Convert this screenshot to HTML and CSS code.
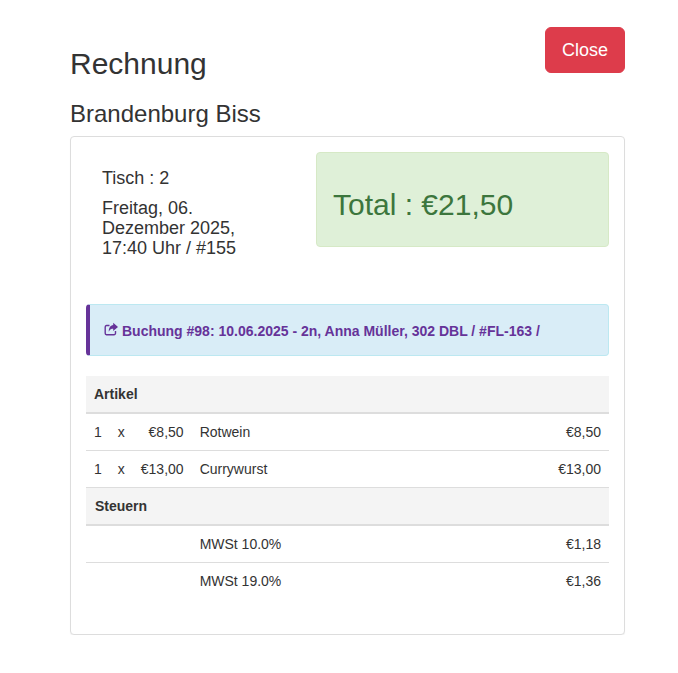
FILE: index.html
```html
<!DOCTYPE html>
<html lang="de">
<head>
<meta charset="utf-8">
<title>Rechnung</title>
<link rel="stylesheet" href="styles.css">
</head>
<body>
<main class="page">
  <header class="head">
    <h2 class="title">Rechnung</h2>
    <button class="close-btn" type="button">Close</button>
  </header>
  <h3 class="subtitle">Brandenburg Biss</h3>
  <section class="card">
    <div class="summary">
      <div class="meta">
        <p class="meta-line">Tisch : 2</p>
        <p class="meta-line">Freitag, 06. Dezember 2025, 17:40 Uhr / #155</p>
      </div>
      <div class="total">Total : €21,50</div>
    </div>
    <div class="booking">
      <svg class="share" viewBox="0 0 14 14" aria-hidden="true"><path d="M11.500 9v2.200a1.500 1.500 0 0 1-1.500 1.500H2.500A1.500 1.500 0 0 1 1.200 11.200V5a1.500 1.500 0 0 1 1.300-1.500H5.500" fill="none" stroke="currentColor" stroke-width="1.400"/><path d="M9.200 .8 14 4.900 9.200 9V6.800C7.500 6.800 5.800 7.200 4.800 9.800 4.500 6.300 6.300 3.200 9.200 3z" fill="currentColor"/></svg>
      <span>Buchung #98: 10.06.2025 - 2n, Anna Müller, 302 DBL / #FL-163 /</span>
    </div>
    <table class="items">
      <thead>
        <tr><th colspan="5">Artikel</th></tr>
      </thead>
      <tbody>
        <tr><td>1</td><td>x</td><td class="num">€8,50</td><td class="wide">Rotwein</td><td class="num">€8,50</td></tr>
        <tr><td>1</td><td>x</td><td class="num">€13,00</td><td class="wide">Currywurst</td><td class="num">€13,00</td></tr>
      </tbody>
      <thead>
        <tr><th class="tax-head" colspan="5">Steuern</th></tr>
      </thead>
      <tbody>
        <tr><td colspan="3"></td><td class="wide">MWSt 10.0%</td><td class="num">€1,18</td></tr>
        <tr><td colspan="3"></td><td class="wide">MWSt 19.0%</td><td class="num">€1,36</td></tr>
      </tbody>
    </table>
  </section>
</main>
</body>
</html>
```
FILE: styles.css
```css
* { box-sizing: border-box; }
html, body { margin: 0; background: #fff; }
body {
  font-family: "Liberation Sans", Arial, sans-serif;
  font-size: 14px;
  line-height: 20px;
  color: #333;
}
.page { width: 555px; margin-left: 70px; padding-top: 27px; }
.head { display: flex; justify-content: space-between; align-items: flex-start; }
.title { margin: 20px 0 0; font-size: 30px; line-height: 33px; font-weight: 400; }
.close-btn {
  width: 80px; height: 46px; padding: 10px 16px;
  font: 18px/24px "Liberation Sans", Arial, sans-serif;
  color: #fff; background: #dd3c4b; border: 1px solid #dd3c4b; border-radius: 6px;
}
.subtitle { margin: 21px 0 9px; font-size: 24px; line-height: 26px; font-weight: 400; }
.card {
  height: 499px; padding: 15px;
  background: #fff; border: 1px solid #ddd; border-radius: 4px;
  box-shadow: 0 1px 1px rgba(0,0,0,.05);
}
.summary { display: flex; justify-content: space-between; align-items: flex-start; height: 152px; }
.meta { width: 230px; padding: 16px 70px 0 16px; font-size: 18px; }
.meta-line { margin: 0 0 10px; }
.total {
  width: 293px; height: 95px; padding: 35px 16px 0;
  font-size: 30px; line-height: 33px; color: #3c763d;
  background: #dff0d8; border: 1px solid #d6e9c6; border-radius: 4px;
}
.booking {
  display: flex; align-items: center; gap: 4px;
  height: 52px; padding: 16px 15px 14px 14px; margin-bottom: 20px;
  font-weight: 700; color: #663399;
  background: #d9edf7; border: 1px solid #bce8f1; border-left: 4px solid #663399; border-radius: 4px;
}
.share { width: 14px; height: 14px; flex: none; margin-bottom: 4px; }
.items { width: 100%; border-collapse: collapse; }
.items th { padding: 8px; text-align: left; background: #f4f4f4; border-top: 1px solid #ddd; border-bottom: 2px solid #ddd; }
.items thead:first-child th { border-top: 0; }
.items .tax-head { padding-left: 9px; }
.items td { padding: 8px; border-top: 1px solid #ddd; white-space: nowrap; }
.items .num { text-align: right; }
.items .wide { width: 100%; }
```
